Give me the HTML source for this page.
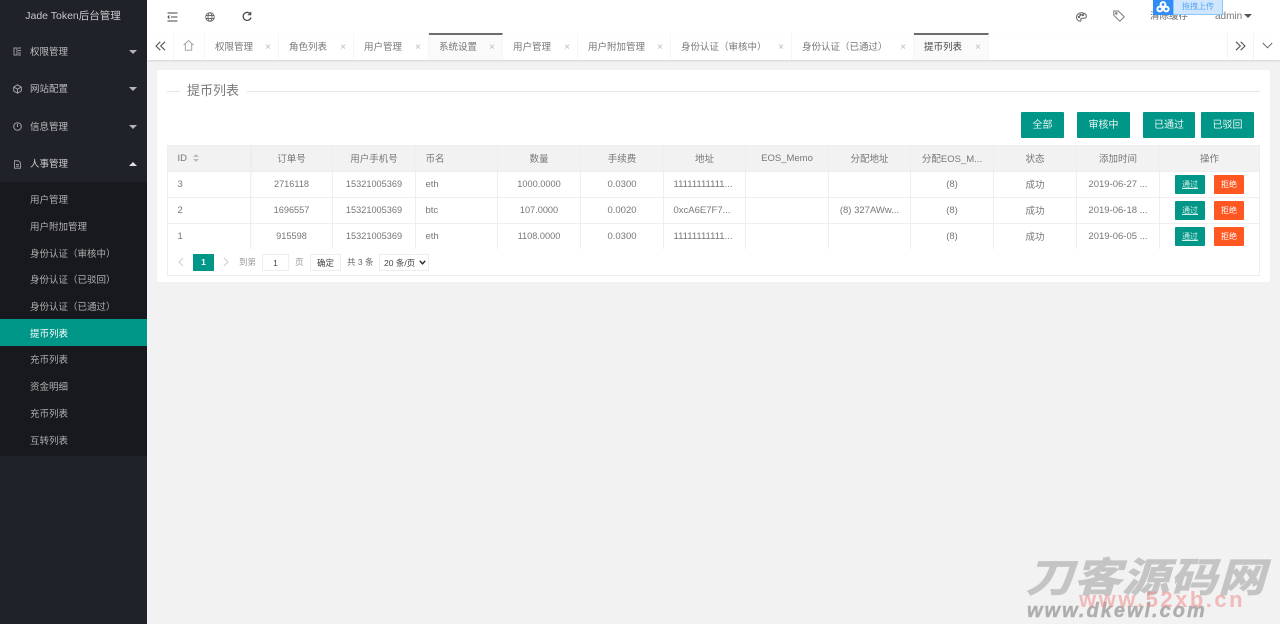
<!DOCTYPE html>
<html lang="zh">
<head>
<meta charset="utf-8">
<title>Jade Token后台管理</title>
<style>
*{box-sizing:border-box}
html,body{margin:0;padding:0;width:1280px;height:624px;overflow:hidden;background:#f2f2f2}
body{position:relative;font-family:"Liberation Sans","Noto Sans CJK SC",sans-serif;font-size:10px;color:#666}
#wrap{position:absolute;left:0;top:0;width:1280px;height:624px;background:#f2f2f2;filter:blur(.3px)}
.a{position:absolute;white-space:nowrap}
#side{position:absolute;left:0;top:0;width:146.5px;height:624px;background:#20222a}
#logo{position:absolute;left:0;top:0;width:146px;height:33px;line-height:33px;text-align:center;color:#c8c8c8;font-size:10.5px}
.m{position:absolute;left:30px;color:#bdbdbd;font-size:9.5px;line-height:14px}
.ic{position:absolute;left:13px}
.tri{position:absolute;left:129px;width:0;height:0;border-left:4px solid transparent;border-right:4px solid transparent}
.down{border-top:4px solid #b5b5b5}
.up{border-bottom:4px solid #e0e0e0}
#sub{position:absolute;left:0;top:182px;width:146.5px;height:274px;background:#18191e}
.s{position:absolute;left:0;width:146.5px;height:27px;line-height:27px;padding-left:30px;color:#b0b0b0;font-size:9.5px}
.s.on{background:#009688;color:#fff;line-height:31px}
#top{position:absolute;left:147px;top:0;width:1133px;height:33px;background:#fff}
#tabs{position:absolute;left:147px;top:33px;width:1133px;height:27px;background:#fff;box-shadow:0 1px 2px rgba(0,0,0,.13)}
.t{position:absolute;top:33px;height:27px;line-height:28px;border-right:1px solid #f6f6f6;color:#777;font-size:9.5px;white-space:nowrap}
.t b{position:absolute;top:1px;right:7px;font-weight:400;color:#bbb;font-size:10px}
.t span{position:absolute;left:10px;top:1px}
.t.sel{background:#fafafa;border-top:2px solid #6b6b70;line-height:26px}
.t.sel span,.t.sel b{top:0}
#card{position:absolute;left:157px;top:70px;width:1113px;height:212px;background:#fff;box-shadow:0 0 1px rgba(0,0,0,.06)}
#hr1{position:absolute;left:167px;top:91px;width:13px;height:1px;background:#e6e6e6}
#hr2{position:absolute;left:247px;top:91px;width:1013px;height:1px;background:#e6e6e6}
#ttl{position:absolute;left:187px;top:83px;font-size:13px;line-height:16px;color:#7a7a7a}
.btn{position:absolute;top:112px;height:26px;line-height:28px;text-align:center;background:#009688;color:#e8f5f3;font-size:10px;border-radius:1px}
table{position:absolute;left:167px;top:145px;width:1092px;border-collapse:collapse;table-layout:fixed;font-size:9.5px;color:#777}
td,th{border:1px solid #eee;height:26px;padding:0 10px;text-align:center;font-weight:400;white-space:nowrap;overflow:hidden}
th{background:#f2f2f2;color:#777;padding-bottom:2px}
th.n{padding-bottom:0}
td.c{padding-bottom:2px}
td.l,th.l{text-align:left;padding-left:9.5px}
td.d{font-size:9.2px;padding-bottom:2px}
td.k{padding:0 0 0 15px;text-align:left}
.o,.r{display:inline-block;width:30px;height:19px;line-height:19px;font-size:8px;color:#fff;text-align:center;border-radius:1px;vertical-align:middle}
.o{background:#009688;text-decoration:underline;color:#d5efeb}
.r{background:#ff5722;margin-left:9px}
#pg{position:absolute;left:167px;top:249px;width:1093px;height:27px;border:1px solid #eee;border-top:0;background:#fff}
.pp{position:absolute;white-space:nowrap;font-size:8.5px;line-height:19px;top:253px;color:#999}
.box{border:1px solid #eee;background:#fff;color:#444;text-align:center}
.wm{position:absolute;white-space:nowrap;font-weight:700;font-style:italic}
</style>
</head>
<body>
<div id="wrap">
<div id="side">
<div id="logo">Jade Token后台管理</div>
<svg class="ic" style="top:47px" width="9" height="9" viewBox="0 0 9 9" fill="none" stroke="#999"><path d="M1 1h3v7H1zM5 1h3M5 3.500h3M5 6h3M5 8h3"/></svg>
<div class="m" style="top:46px">权限管理</div><div class="tri down" style="top:50px"></div>
<svg class="ic" style="top:84px" width="9" height="10" viewBox="0 0 9 10" fill="none" stroke="#a5a5a5"><path d="M4.500 .8 8.300 3v4L4.500 9.200 .7 7V3zM.8 3l3.700 2.200L8.200 3M4.500 5.200V9"/></svg>
<div class="m" style="top:83px">网站配置</div><div class="tri down" style="top:87px"></div>
<svg class="ic" style="top:122px" width="9" height="9" viewBox="0 0 9 9" fill="none" stroke="#a5a5a5"><circle cx="4.500" cy="4.500" r="3.800"/><path d="M4.500 2v3"/></svg>
<div class="m" style="top:121px">信息管理</div><div class="tri down" style="top:125px"></div>
<svg class="ic" style="top:160px" width="9" height="9" viewBox="0 0 9 9" fill="none" stroke="#999"><path d="M1.500 .8h4l2 2v5.400h-6zM3 4.500h3M3 6.300h3"/></svg>
<div class="m" style="top:158px;color:#d0d0d0">人事管理</div><div class="tri up" style="top:162px"></div>
<div id="sub"></div>
<div class="s" style="top:187px">用户管理</div>
<div class="s" style="top:214px">用户附加管理</div>
<div class="s" style="top:241px">身份认证（审核中）</div>
<div class="s" style="top:267px">身份认证（已驳回）</div>
<div class="s" style="top:294px">身份认证（已通过）</div>
<div class="s on" style="top:319px">提币列表</div>
<div class="s" style="top:347px">充币列表</div>
<div class="s" style="top:374px">资金明细</div>
<div class="s" style="top:401px">充币列表</div>
<div class="s" style="top:428px">互转列表</div>
</div>

<div id="top"></div>
<svg class="a" style="left:167px;top:12px" width="11" height="10" viewBox="0 0 11 10" fill="none" stroke="#444"><path d="M.5 1h10M4 5h6.500M.5 9h10M2.500 3.500 1 5l1.500 1.500"/></svg>
<svg class="a" style="left:205px;top:12px" width="10" height="10" viewBox="0 0 10 10" fill="none" stroke="#666" stroke-width=".9"><circle cx="5" cy="5" r="4.300"/><ellipse cx="5" cy="5" rx="2" ry="4.300"/><path d="M.8 3.500h8.400M.8 6.500h8.400"/></svg>
<svg class="a" style="left:242px;top:11px" width="10" height="11" viewBox="0 0 10 11" fill="none" stroke="#444" stroke-width="1.200"><path d="M8.500 3.200A4 4 0 1 0 9 6.500"/><path d="M8.800 .8v3H5.800" stroke-width="1"/></svg>
<svg class="a" style="left:1076px;top:12px" width="11" height="10" viewBox="0 0 11 10" fill="none" stroke="#666"><path d="M5.500 .8C2.500 .8.500 2.800.500 5.200s2 4 3.700 4c1 0 1-.9.600-1.500-.4-.8.200-1.400 1-1.400h2c1.300 0 2.600-.6 2.600-2C10.400 2.300 8.400.8 5.500.8z"/><circle cx="3" cy="5" r=".7"/><circle cx="4.500" cy="3" r=".7"/><circle cx="7" cy="3" r=".7"/></svg>
<svg class="a" style="left:1113px;top:10px" width="12" height="12" viewBox="0 0 12 12" fill="none" stroke="#777"><path d="M.8 1h4.500l5.900 5.800-4.300 4.400L.8 5.300z"/><circle cx="3.300" cy="3.400" r=".8"/></svg>
<div class="a" style="left:1150px;top:10px;font-size:9.500px;line-height:14px;color:#666">清除缓存</div>
<div class="a" style="left:1215px;top:10px;font-size:10px;line-height:14px;color:#777">admin</div>
<div class="a" style="left:1244px;top:14px;width:0;height:0;border-left:4px solid transparent;border-right:4px solid transparent;border-top:4px solid #555"></div>
<div class="a" style="left:1153px;top:0;width:20px;height:15px;background:#2f8df5"></div>
<svg class="a" style="left:1156px;top:1px" width="14" height="12" viewBox="0 0 14 12" fill="none" stroke="#fff" stroke-width="2"><circle cx="7" cy="3.500" r="2.400"/><circle cx="3.800" cy="8" r="2.400"/><circle cx="10.200" cy="8" r="2.400"/></svg>
<div class="a" style="left:1173px;top:0;width:50px;height:15px;line-height:14px;background:#cfe6fd;border:1px solid #8ec5fa;border-top:0;color:#5aa5ee;font-size:8px;text-align:center">拖拽上传</div>

<div id="tabs"></div>
<div class="t" style="left:147px;width:27px"></div>
<svg class="a" style="left:155px;top:41px" width="11" height="10" viewBox="0 0 11 10" fill="none" stroke="#555" stroke-width="1.100"><path d="M5.300 .8 1 5l4.300 4.200M10 .8 5.700 5l4.300 4.200"/></svg>
<div class="t" style="left:174px;width:31px"></div>
<svg class="a" style="left:183px;top:40px" width="11" height="11" viewBox="0 0 11 11" fill="none" stroke="#999" stroke-width=".9"><path d="M.6 5 5.500.6l4.900 4.400M2.300 4v6.200h6.400V4"/></svg>
<div class="t" style="left:205px;width:74px"><span>权限管理</span><b>×</b></div>
<div class="t" style="left:279px;width:75px"><span>角色列表</span><b>×</b></div>
<div class="t" style="left:354px;width:75px"><span>用户管理</span><b>×</b></div>
<div class="t sel" style="left:429px;width:74px"><span>系统设置</span><b>×</b></div>
<div class="t" style="left:503px;width:75px"><span>用户管理</span><b>×</b></div>
<div class="t" style="left:578px;width:93px"><span>用户附加管理</span><b>×</b></div>
<div class="t" style="left:671px;width:121px"><span>身份认证（审核中）</span><b>×</b></div>
<div class="t" style="left:792px;width:122px"><span>身份认证（已通过）</span><b>×</b></div>
<div class="t sel" style="left:914px;width:75px;color:#444"><span>提币列表</span><b>×</b></div>
<div class="a" style="left:1227px;top:33px;width:1px;height:27px;background:#f3f3f3"></div>
<div class="a" style="left:1253px;top:33px;width:1px;height:27px;background:#f3f3f3"></div>
<svg class="a" style="left:1235px;top:41px" width="11" height="10" viewBox="0 0 11 10" fill="none" stroke="#555" stroke-width="1.100"><path d="M1 .8 5.300 5 1 9.200M5.700 .8 10 5 5.700 9.200"/></svg>
<svg class="a" style="left:1262px;top:42px" width="11" height="7" viewBox="0 0 11 7" fill="none" stroke="#666"><path d="M.8 1 5.500 5.800 10.200 1"/></svg>

<div id="card"></div>
<div id="hr1"></div><div id="hr2"></div>
<div id="ttl">提币列表</div>
<div class="btn" style="left:1021px;width:43px">全部</div>
<div class="btn" style="left:1077px;width:53px">审核中</div>
<div class="btn" style="left:1143px;width:52px">已通过</div>
<div class="btn" style="left:1201px;width:53px">已驳回</div>

<table>
<colgroup><col style="width:83px"><col style="width:82px"><col style="width:83px"><col style="width:82px"><col style="width:83px"><col style="width:83px"><col style="width:82px"><col style="width:83px"><col style="width:82px"><col style="width:83px"><col style="width:83px"><col style="width:83px"><col style="width:100px"></colgroup>
<tr><th class="l n">ID <span style="display:inline-block;margin-left:3px;vertical-align:-1px;width:7px;height:8px;position:relative"><i style="position:absolute;top:0;left:0;border:3.500px solid transparent;border-top:0;border-bottom:3px solid #bbb"></i><i style="position:absolute;top:5px;left:0;border:3.500px solid transparent;border-bottom:0;border-top:3px solid #bbb"></i></span></th><th>订单号</th><th>用户手机号</th><th class="l">币名</th><th>数量</th><th>手续费</th><th>地址</th><th class="n">EOS_Memo</th><th>分配地址</th><th>分配EOS_M...</th><th>状态</th><th>添加时间</th><th>操作</th></tr>
<tr><td class="l">3</td><td class="d">2716118</td><td class="d">15321005369</td><td class="l">eth</td><td class="d">1000.0000</td><td>0.0300</td><td class="l">11111111111...</td><td></td><td></td><td>(8)</td><td class="c">成功</td><td>2019-06-27 ...</td><td class="k"><span class="o">通过</span><span class="r">拒绝</span></td></tr>
<tr><td class="l">2</td><td class="d">1696557</td><td class="d">15321005369</td><td class="l">btc</td><td class="d">107.0000</td><td>0.0020</td><td class="l">0xcA6E7F7...</td><td></td><td>(8) 327AWw...</td><td>(8)</td><td class="c">成功</td><td>2019-06-18 ...</td><td class="k"><span class="o">通过</span><span class="r">拒绝</span></td></tr>
<tr><td class="l">1</td><td class="d">915598</td><td class="d">15321005369</td><td class="l">eth</td><td class="d">1108.0000</td><td>0.0300</td><td class="l">11111111111...</td><td></td><td></td><td>(8)</td><td class="c">成功</td><td>2019-06-05 ...</td><td class="k"><span class="o">通过</span><span class="r">拒绝</span></td></tr>
</table>
<div class="a" style="left:251px;top:145px;width:3px;height:104px;background:linear-gradient(90deg,rgba(0,0,0,.025),rgba(0,0,0,0))"></div>

<div id="pg"></div>
<svg class="a" style="left:178px;top:257px" width="6" height="10" viewBox="0 0 6 10" fill="none" stroke="#ccc"><path d="M5 1 1 5l4 4"/></svg>
<div class="a" style="left:193px;top:254px;width:21px;height:17px;line-height:17px;background:#009688;color:#fff;text-align:center;font-size:8.500px;font-weight:700">1</div>
<svg class="a" style="left:223px;top:257px" width="6" height="10" viewBox="0 0 6 10" fill="none" stroke="#ccc"><path d="M1 1l4 4-4 4"/></svg>
<div class="pp" style="left:239px">到第</div>
<div class="pp box" style="left:262px;top:254px;width:27px;height:17px;line-height:16px">1</div>
<div class="pp" style="left:295px">页</div>
<div class="pp box" style="left:310px;top:254px;width:31px;height:17px;line-height:16px">确定</div>
<div class="pp" style="left:347px;color:#666">共 3 条</div>
<div class="pp box" style="left:379px;top:254px;width:50px;height:17px;line-height:16px;text-align:left;padding-left:4px">20 条/页</div>
<svg class="a" style="left:419px;top:260px" width="7" height="5" viewBox="0 0 7 5" fill="none" stroke="#222" stroke-width="1.400"><path d="M.8 .8 3.500 3.800 6.200 .8"/></svg>

<div class="wm" style="left:1026px;top:552px;font-size:47px;line-height:52px;color:#c4c4c4;letter-spacing:1px;-webkit-text-stroke:1px #c4c4c4;transform:scaleY(.85);transform-origin:0 50%">刀客源码网</div>
<div class="wm" style="left:1027px;top:600px;font-size:20px;line-height:22px;color:#aeaeae;letter-spacing:2px;-webkit-text-stroke:.4px #aeaeae">www.dkewl.com</div>
<div class="wm" style="left:1079px;top:590px;font-size:22px;line-height:20px;color:rgba(240,130,130,.5);letter-spacing:2.500px;font-style:normal;font-weight:700">www.52xb.cn</div>
</div>
</body>
</html>
